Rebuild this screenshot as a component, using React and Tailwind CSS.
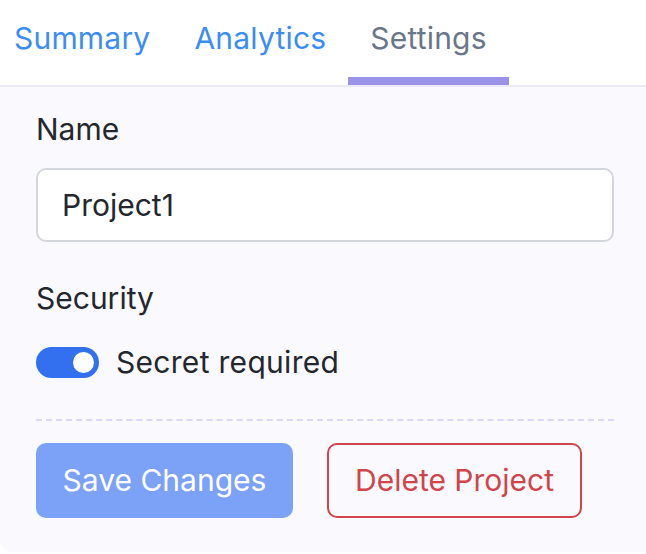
import React, { useState } from 'react';

const tabs = ['Summary', 'Analytics', 'Settings'];

export default function App() {
  const [active, setActive] = useState('Settings');
  const [secret, setSecret] = useState(true);

  return (
    <div className="w-[646px] h-[554px] bg-white overflow-hidden" style={{ fontFamily: 'Inter, "Noto Sans", sans-serif' }}>
      <div className="flex h-[85px] -ml-[8px]">
        {tabs.map((t) => (
          <button
            key={t}
            onClick={() => setActive(t)}
            className={`relative px-[22px] pt-[18px] text-[30px] leading-[40px] tracking-[0.2px] self-stretch flex items-start ${
              active === t ? 'text-[#6b7588]' : 'text-[#3b8cf5]'
            }`}
          >
            {t}
            {active === t && <span className="absolute left-0 right-0 bottom-0 h-[8px] bg-[#9b93e8]" />}
          </button>
        ))}
      </div>
      <div className="border-t-2 border-[#ece9fb] bg-[#f9f9fe] rounded-bl-[12px] h-[467px] px-[36px] pt-[24px]">
        <label className="block text-[30px] leading-[36px] text-[#24272d]">Name</label>
        <input
          defaultValue="Project1"
          className="mt-[21px] w-[578px] h-[74px] rounded-[10px] border-2 border-[#d3d6dc] bg-white px-[24px] text-[30px] text-[#24272d] outline-none"
        />
        <div className="mt-[38px] text-[30px] leading-[36px] text-[#24272d]">Security</div>
        <div className="mt-[28px] flex items-center gap-[17px]">
          <button
            onClick={() => setSecret(!secret)}
            className={`relative w-[63px] h-[31px] rounded-full ${secret ? 'bg-[#3370f0]' : 'bg-gray-300'}`}
          >
            <span
              className={`absolute top-[5px] w-[21px] h-[21px] rounded-full bg-white ${secret ? 'left-[37px]' : 'left-[5px]'}`}
            />
          </button>
          <span className="text-[30px] leading-[36px] tracking-[0.3px] text-[#24272d]">Secret required</span>
        </div>
        <div className="mt-[39px] border-t-2 border-dashed border-[#dcd5f7] w-[578px]" />
        <div className="mt-[22px] flex gap-[34px]">
          <button className="w-[257px] h-[75px] rounded-[10px] bg-[#7ba2f7] text-white text-[30px]">Save Changes</button>
          <button className="w-[255px] h-[75px] rounded-[10px] border-2 border-[#d0454b] text-[#d0454b] text-[30px]">Delete Project</button>
        </div>
      </div>
    </div>
  );
}
